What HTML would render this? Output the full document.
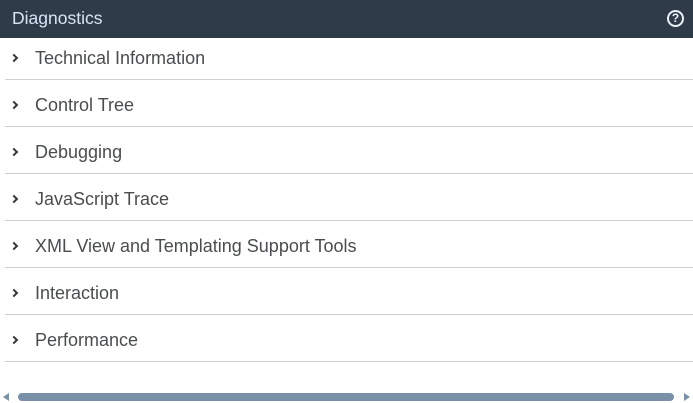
<!DOCTYPE html>
<html><head><style>
body{margin:0;width:693px;height:403px;overflow:hidden;background:#fff;font-family:"Liberation Sans",sans-serif;position:relative}
.hd{position:absolute;left:0;top:0;width:693px;height:38px;background:#2f3b48;color:#d7e6f5;font-size:17.5px;line-height:37px;padding-left:12px;box-sizing:border-box}
.q{position:absolute;left:667px;top:10px;width:17px;height:17px;border:2px solid #e8f0f8;border-radius:50%;box-sizing:border-box;color:#e8f0f8;font-size:12px;font-weight:bold;line-height:13px;text-align:center}
.row{position:absolute;left:5px;width:688px;height:46px;border-bottom:1px solid #cfcfcf;color:#4a4d50;font-size:18px}
.row span{position:absolute;left:30px;top:15px}
.row i{position:absolute;left:6px;top:22px;width:4px;height:4px;border-right:2px solid #32363a;border-top:2px solid #32363a;transform:rotate(45deg)}
.sb{position:absolute;left:18px;top:393px;width:656px;height:8px;border-radius:4px;background:#7a90a8}
</style></head><body>
<div class="hd">Diagnostics<div class="q">?</div></div>
<div class="row" style="top:33px"><i></i><span>Technical Information</span></div>
<div class="row" style="top:80px"><i></i><span>Control Tree</span></div>
<div class="row" style="top:127px"><i></i><span>Debugging</span></div>
<div class="row" style="top:174px"><i></i><span>JavaScript Trace</span></div>
<div class="row" style="top:221px"><i></i><span>XML View and Templating Support Tools</span></div>
<div class="row" style="top:268px"><i></i><span>Interaction</span></div>
<div class="row" style="top:315px"><i></i><span>Performance</span></div>
<div style="position:absolute;left:3px;top:393px;width:0;height:0;border-top:4px solid transparent;border-bottom:4px solid transparent;border-right:6px solid #7a90a8"></div>
<div class="sb"></div>
<div style="position:absolute;left:684px;top:393px;width:0;height:0;border-top:4px solid transparent;border-bottom:4px solid transparent;border-left:6px solid #7a90a8"></div>
</body></html>
